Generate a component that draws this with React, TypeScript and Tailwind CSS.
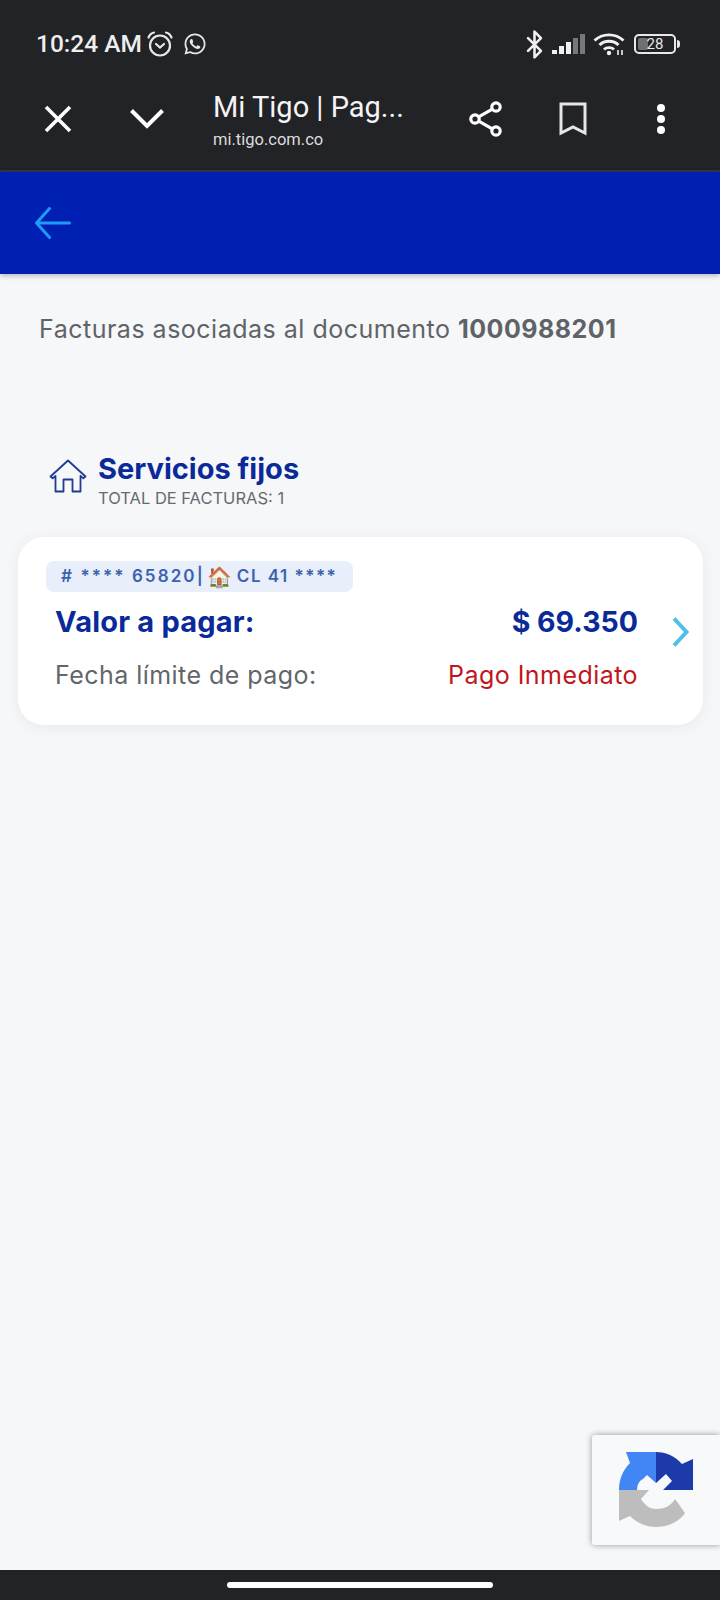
import { Bluetooth } from 'lucide-react';
import { FaWhatsapp } from 'react-icons/fa';

const AlarmIcon = () => (
  <svg width="26" height="26" viewBox="0 0 26 26" fill="none" stroke="#e8e8e8" strokeWidth="2.2" strokeLinecap="round">
    <circle cx="13" cy="14.5" r="10" />
    <path d="M9 13 13 16.5 17 13" />
    <path d="M1.5 6.5C2.5 4 4.5 2 7 1.5" />
    <path d="M24.5 6.5C23.5 4 21.5 2 19 1.5" />
  </svg>
);

const SignalIcon = () => (
  <svg width="33" height="22" viewBox="0 0 33 22">
    <rect x="0" y="17" width="5" height="4" fill="#f0f0f0" />
    <rect x="7" y="13" width="5" height="8" fill="#f0f0f0" />
    <rect x="14" y="9" width="5" height="12" fill="#f0f0f0" />
    <rect x="21" y="5" width="5" height="16" fill="#77787a" />
    <rect x="28" y="1" width="5" height="20" fill="#77787a" />
  </svg>
);

const WifiIcon = () => (
  <svg width="32" height="24" viewBox="0 0 32 24" fill="none" stroke="#f0f0f0" strokeWidth="2.8">
    <path d="M1.5 8.5C9.5 1 22.5 1 30.5 8.5" />
    <path d="M6.5 13C11.5 8 20.5 8 25.5 13" />
    <path d="M11 17.5C13.5 15 18.5 15 21 17.5" />
    <circle cx="16" cy="21" r="2.2" fill="#f0f0f0" stroke="none" />
    <path d="M25 18v5M29 18v5" strokeWidth="1.6" />
  </svg>
);

const Battery = () => (
  <div className="flex items-center">
    <div className="relative flex h-[20px] w-[42px] items-center justify-center overflow-hidden rounded-[5px] border-2 border-[#e8e8e8]">
      <div className="absolute bottom-[2px] left-[2px] top-[2px] w-[10px] rounded-[2px] bg-[#6f7072]" />
      <span className="relative text-[15px] leading-none text-[#e8e8e8]">28</span>
    </div>
    <div className="ml-[1px] h-[8px] w-[3px] rounded-r-sm bg-[#e8e8e8]" />
  </div>
);

const ShareIcon = () => (
  <svg width="36" height="38" viewBox="0 0 36 38" fill="none" stroke="#ffffff" strokeWidth="3.2">
    <circle cx="28" cy="7" r="4.2" />
    <circle cx="7" cy="19" r="4.2" />
    <circle cx="28" cy="31" r="4.2" />
    <path d="M24.3 9.2 10.7 16.9M10.7 21.1 24.3 28.8" />
  </svg>
);

const HomeIcon = () => (
  <svg width="38" height="34" viewBox="0 0 38 34" fill="none" stroke="#1f3c8f" strokeWidth="1.8" strokeLinejoin="round">
    <path d="M1.5 17.5 19 1.5l17.5 16-2.2 1.8-2.8-2.5V32.5H23.5V20.5h-9V32.5H6.5V16.8l-2.8 2.5Z" />
  </svg>
);

const RecaptchaLogo = () => (
  <svg width="75" height="76" viewBox="0 0 75 76">
    <path fill="#4285f4" d="M0 38C0 27 4 18 11 11L7 0H37V31L28 23 24 27C20 29 18 33 18 38Z" />
    <path fill="#1c3aa9" d="M37 0C47 0 56 4 63 12L74 7V38H44L53 29 47 22 37 31Z" />
    <path fill="#bdbdbd" d="M0 38H30L22 47C26 53 30 57 37 57 45 57 52 54 56 47L66 61C60 70 49 75 37 75 27 75 18 71 11 64L0 69Z" />
  </svg>
);

export default function App() {
  return (
    <div className="relative flex h-[1600px] w-[720px] flex-col overflow-hidden bg-[#f6f7f9] font-['Inter',sans-serif]">
      <header className="h-[172px] shrink-0 border-b-2 border-[#33334a] bg-[#222327] font-['Roboto',sans-serif] text-white">
        <div className="flex h-[44px] items-center justify-between pl-[36px] pr-[40px] pt-[44px]">
          <div className="flex items-center">
            <span className="text-[24.5px] font-medium text-[#eeeeee]">10:24 AM</span>
            <div className="ml-[5px]"><AlarmIcon /></div>
            <FaWhatsapp className="ml-[10px] text-[24px] text-[#e8e8e8]" />
          </div>
          <div className="flex items-center">
            <Bluetooth size={31} strokeWidth={2} className="text-[#f0f0f0]" />
            <div className="ml-[2px]"><SignalIcon /></div>
            <div className="ml-[8px]"><WifiIcon /></div>
            <div className="ml-[9px]"><Battery /></div>
          </div>
        </div>
        <nav className="mt-[39px] flex h-[72px] items-center pl-[44px]">
          <svg width="28" height="28" viewBox="0 0 28 28" fill="none" stroke="#ffffff" strokeWidth="3.6">
            <path d="M2 2 26 26M26 2 2 26" />
          </svg>
          <svg width="34" height="22" viewBox="0 0 34 22" fill="none" stroke="#ffffff" strokeWidth="4" className="ml-[58px]">
            <path d="M1.5 2.5 17 18 32.5 2.5" />
          </svg>
          <div className="-mb-[3px] ml-[49px] w-[200px]">
            <div className="text-[29px] leading-[34px] text-[#f4f4f4]">Mi Tigo | Pag...</div>
            <div className="mt-[5px] text-[16.5px] leading-[22px] text-[#dddddd]">mi.tigo.com.co</div>
          </div>
          <div className="ml-[55px]"><ShareIcon /></div>
          <svg width="28" height="34" viewBox="0 0 28 34" fill="none" stroke="#e6e6e6" strokeWidth="3" className="ml-[55px]">
            <path d="M2 2H26V31L14 25 2 31Z" />
          </svg>
          <div className="ml-[70px] flex flex-col gap-[3px]">
            <div className="h-[8px] w-[8px] rounded-full bg-white" />
            <div className="h-[8px] w-[8px] rounded-full bg-white" />
            <div className="h-[8px] w-[8px] rounded-full bg-white" />
          </div>
        </nav>
      </header>

      <div className="flex h-[102px] shrink-0 items-center bg-[#0020b3] pl-[35px] shadow-[0_2px_5px_rgba(0,0,40,0.25)]">
        <svg width="36" height="32" viewBox="0 0 36 32" fill="none" stroke="#1e9bf5" strokeWidth="3" strokeLinecap="round" strokeLinejoin="round">
          <path d="M14.5 1.5 1.5 16l13 14.5M1.5 16h33" />
        </svg>
      </div>

      <main className="flex flex-col">
        <p className="ml-[39px] mt-[38px] text-[25px] leading-[34px] tracking-[0.5px] text-[#5f6368]">
          Facturas asociadas al documento <span className="font-bold">1000988201</span>
        </p>

        <div className="ml-[49px] mt-[104px] flex items-start">
          <div className="mt-[9px]"><HomeIcon /></div>
          <div className="ml-[11px]">
            <h2 className="text-[29px] font-bold leading-[38px] text-[#0a2a9a]">Servicios fijos</h2>
            <div className="text-[16.5px] leading-[20px] text-[#666a70]">TOTAL DE FACTURAS: 1</div>
          </div>
        </div>

        <article className="relative ml-[18px] mt-[29px] h-[188px] w-[685px] rounded-[26px] bg-white shadow-[0_2px_14px_rgba(60,70,90,0.08)]">
          <div className="ml-[28px] mt-[24px] inline-flex h-[31px] w-[307px] items-center rounded-[8px] bg-[#e8eefa] pl-[15px] text-[17px] font-semibold text-[#3a63ad]">
            <span className="tracking-[2.1px]"># **** 65820|</span>
            <span className="ml-[2px] mr-[5px] text-[20px]">🏠</span>
            <span className="tracking-[1.5px]">CL 41 ****</span>
          </div>
          <div className="ml-[37px] mt-[9px] flex w-[583px] items-center justify-between">
            <span className="text-[29px] font-bold leading-[42px] tracking-[0.2px] text-[#0a2a9a]">Valor a pagar:</span>
            <span className="text-[28.5px] font-bold leading-[42px] text-[#0a2a9a]">$ 69.350</span>
          </div>
          <div className="ml-[37px] mt-[15px] flex w-[583px] items-center justify-between text-[25px] leading-[34px] tracking-[0.45px]">
            <span className="text-[#62666b]">Fecha límite de pago:</span>
            <span className="text-[#c0161e]">Pago Inmediato</span>
          </div>
          <svg width="17" height="30" viewBox="0 0 17 30" fill="none" stroke="#4cc0e8" strokeWidth="4" className="absolute left-[654px] top-[80px]">
            <path d="M2 1.5 14.5 15 2 28.5" />
          </svg>
        </article>
      </main>

      <div className="absolute left-[592px] top-[1435px] flex h-[110px] w-[128px] items-center rounded-l-[3px] bg-[#f8f9fb] pl-[27px] shadow-[0_0_6px_rgba(0,0,0,0.4)]">
        <RecaptchaLogo />
      </div>

      <div className="mt-auto flex h-[30px] shrink-0 items-center justify-center bg-[#222327]">
        <div className="h-[6px] w-[266px] rounded-full bg-white" />
      </div>
    </div>
  );
}
